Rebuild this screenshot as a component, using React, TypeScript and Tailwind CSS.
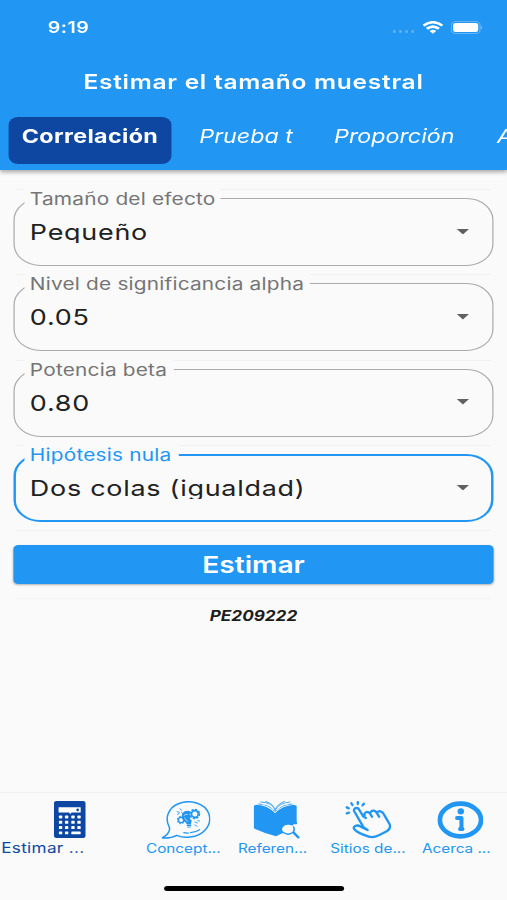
import React from "react";

type FieldProps = {
  label: string;
  value: string;
  notch: string;
  focused?: boolean;
};

function Divider() {
  return <div className="mx-[13px] h-px shrink-0 bg-[#f1f1f1]" />;
}

function SelectField({ label, value, notch, focused }: FieldProps) {
  return (
    <div
      className={`relative mx-[11.4px] my-[8.15px] flex h-[68px] shrink-0 items-center justify-between rounded-[22px] ${
        focused ? "border-2 border-[#2196f3] pl-[11px] pr-[18px]" : "border border-[#ababab] pl-[12px] pr-[19px]"
      }`}
    >
      <div
        className={`absolute h-5 bg-[#fafafa] pl-[4px] text-[17px] leading-5 tracking-[0.16px] ${notch} ${
          focused ? "-top-[11px] left-[7px] text-[#2196f3]" : "-top-[10px] left-[8px] text-[#757575]"
        }`}
      >
        {label}
      </div>
      <div className="h-[22px] overflow-hidden text-[22px] leading-[22px] tracking-[0.6px] text-[#212121]">
        {value}
      </div>
      <svg className="mb-px h-[5.5px] w-[10px]" viewBox="0 0 10 5" preserveAspectRatio="none">
        <path d="M0 0h10L5 5z" fill="#616161" />
      </svg>
    </div>
  );
}

function CalculatorIcon() {
  const cols = [15, 33, 52, 70];
  const rows = [44, 60, 76, 92];
  return (
    <svg className="h-[37px] w-[26px]" viewBox="0 0 95 112" preserveAspectRatio="none">
      <rect width="95" height="112" rx="8" fill="#0d47a1" />
      <path d="M14 19h66v16H53l-4 4-4-4H14z" fill="#fff" />
      <circle cx="71" cy="27" r="4" fill="#0d47a1" />
      {rows.map((y, r) =>
        cols.map((x, c) =>
          r === 3 && c > 1 ? null : <rect key={`${x}-${y}`} x={x} y={y} width="10" height="9" rx="2" fill="#fff" />
        )
      )}
      <rect x="52" y="92" width="28" height="9" rx="2" fill="#fff" />
    </svg>
  );
}

function ConceptIcon() {
  return (
    <svg className="ml-[4px] h-[38px] w-[40px]" viewBox="0 0 146 114" preserveAspectRatio="none" fill="none" stroke="#2196f3" strokeLinecap="round" strokeLinejoin="round">
      <path d="M2 111C18 101 26 90 23 79C8 52 20 21 48 9C84-7 130 7 141 39C151 73 125 104 85 108C68 111 54 107 45 103C32 110 18 112 2 111Z" strokeWidth="4.5" />
      <path d="M66 95q8 2 14 1M86 95q15-1 27-9" strokeWidth="3.5" />
      <path d="M76 69C75 61 60 59 61 46C61 34 73 28 84 32C80 38 81 42 87 46C82 50 82 55 88 59L86 69Z" fill="#2196f3" strokeWidth="3" />
      <path d="M76 73h11M78 78h7" strokeWidth="3.5" />
      <circle cx="99" cy="39" r="10" strokeWidth="5" />
      <circle cx="99" cy="39" r="14" strokeWidth="4" strokeDasharray="4 7" />
      <circle cx="58" cy="57" r="8" strokeWidth="4" />
      <circle cx="58" cy="57" r="11" strokeWidth="3" strokeDasharray="3 6" />
      <path d="M67 43q5-5 9-3M68 51q6 4 9 10" stroke="#fafafa" strokeWidth="2" />
      <path d="M54 23l6 5M46 32l7 2M59 33l3 4M47 40l5-2M99 63l8 3M99 72l7 4M108 59l5 1" strokeWidth="2.5" />
    </svg>
  );
}

function BookIcon() {
  return (
    <svg className="ml-[2px] h-[38px] w-[38px]" viewBox="0 0 138 114" preserveAspectRatio="none">
      <path d="M1 14l8-3Q44 13 64 37Q82 14 120 11l8 3V77L116 95L85 97L67 106Q36 98 1 82Z" fill="#2196f3" />
      <path d="M14 9Q45 9 64 32Q82 11 115 9M20 3Q52 3 64 29Q76 6 109 3M35 1Q58 7 64 27Q70 9 93 1" fill="none" stroke="#2196f3" strokeWidth="2.5" />
      <path d="M24 8Q50 9 61 27M105 8Q80 10 68 27" fill="none" stroke="#fafafa" strokeWidth="3.5" />
      <path d="M92 99L119 70H138V114H92Z" fill="#fafafa" />
      <ellipse cx="103" cy="85" rx="18" ry="14" fill="#fafafa" />
      <path d="M119 95l14 14" stroke="#2196f3" strokeWidth="7" strokeLinecap="round" />
      <path d="M88 94Q104 106 118 93Q124 85 118 76" fill="none" stroke="#2196f3" strokeWidth="4" />
      <path d="M127 62v7" stroke="#2196f3" strokeWidth="4" />
    </svg>
  );
}

function TapIcon() {
  return (
    <svg className="ml-[2px] h-[38px] w-[38px]" viewBox="0 0 138 114" preserveAspectRatio="none" fill="none" stroke="#2196f3" strokeLinecap="round" strokeLinejoin="round">
      <path
        d="M53 46L41 26C36 17 23 22 26 30L54 79L66 87L44 76C33 70 22 77 26 84C34 94 50 101 70 107C80 110 91 107 101 102L120 92C131 86 135 78 131 69L116 43C110 30 98 26 94 37C88 26 77 27 73 37C65 29 55 34 57 43M53 46L61 51M73 37L79 47M94 37L100 47"
        strokeWidth="7"
      />
      <path d="M4 37l7-2M4 19l6 3M18 7l3 5M37 3v6M55 8l-4 5" strokeWidth="7" />
    </svg>
  );
}

function InfoIcon() {
  return (
    <svg className="h-[38px] w-[38px]" viewBox="0 0 138 114" preserveAspectRatio="none">
      <ellipse cx="69" cy="57" rx="61" ry="49" fill="none" stroke="#2196f3" strokeWidth="14" />
      <circle cx="70" cy="31" r="9.5" fill="#2196f3" />
      <path d="M59 51h13V84M68 84h7" fill="none" stroke="#2196f3" strokeWidth="12" strokeLinecap="round" strokeLinejoin="round" />
    </svg>
  );
}

const navItems = [
  { label: "Concept...", icon: <ConceptIcon />, offset: "" },
  { label: "Referen...", icon: <BookIcon />, offset: "mr-[5px]" },
  { label: "Sitios de...", icon: <TapIcon />, offset: "" },
  { label: "Acerca ...", icon: <InfoIcon />, offset: "mr-[6.5px]" },
];

export default function App() {
  return (
    <div className="h-[900px] w-[507px] overflow-hidden bg-[#fafafa]">
      {/* The phone screen is laid out 414 wide and stretched horizontally. */}
      <div className="flex h-[900px] w-[414px] origin-top-left scale-x-[1.2246] flex-col whitespace-nowrap bg-[#fafafa] font-['Inter','Liberation_Sans',sans-serif]">
        <header className="z-10 h-[170px] shrink-0 bg-[#2196f3] text-white shadow-[0_2px_4px_rgba(0,0,0,0.35)]">
          <div className="flex h-[54px] items-center justify-between pl-[39px] pr-[20px]">
            <span className="text-[16px] font-semibold tracking-[0.4px]">9:19</span>
            <div className="flex items-center">
              <div className="mr-[7px] mt-[9px] flex gap-[2.5px] opacity-30">
                <i className="size-[2.5px] rounded-full bg-white" />
                <i className="size-[2.5px] rounded-full bg-white" />
                <i className="size-[2.5px] rounded-full bg-white" />
                <i className="size-[2.5px] rounded-full bg-white" />
              </div>
              <svg className="mr-[6px] h-[13px] w-[17px]" viewBox="0 0 17 13" fill="none" stroke="#fff" strokeWidth="2.5">
                <path d="M.8 4.6Q8.5-2.2 16.2 4.6M3.6 7.8Q8.5 3.4 13.4 7.8" />
                <path d="M8.5 12.7L5.8 9.9Q8.5 7.8 11.2 9.9Z" fill="#fff" stroke="none" />
              </svg>
              <svg className="h-[13px] w-[26px]" viewBox="0 0 26 13">
                <rect x=".5" y=".5" width="23.5" height="12" rx="3.5" fill="none" stroke="#fff" strokeOpacity=".3" />
                <rect x="2" y="2" width="20.5" height="9" rx="2" fill="#fff" />
                <path d="M25 4.5q1.4 2 0 4z" fill="#fff" fillOpacity=".5" />
              </svg>
            </div>
          </div>
          <h1 className="flex h-[54px] items-center justify-center pt-px text-[20px] font-semibold tracking-[0.6px]">
            Estimar el tamaño muestral
          </h1>
          <nav className="flex h-[62px] overflow-hidden pl-[7.3px] pt-[9px] text-[19px] leading-[39px]">
            <span className="h-[47px] w-[132.3px] shrink-0 rounded-lg bg-[#0d47a1] text-center font-bold tracking-[0.3px]">
              Correlación
            </span>
            <span className="ml-[23.2px] w-[110px] shrink-0 italic">Prueba t</span>
            <span className="w-[133px] shrink-0 italic">Proporción</span>
            <span className="shrink-0 italic">A</span>
          </nav>
        </header>

        <main className="flex grow flex-col pt-[19px]">
          <Divider />
          <SelectField label="Tamaño del efecto" value="Pequeño" notch="w-[160px]" />
          <Divider />
          <SelectField label="Nivel de significancia alpha" value="0.05" notch="w-[233px]" />
          <Divider />
          <SelectField label="Potencia beta" value="0.80" notch="w-[122px]" />
          <Divider />
          <SelectField label="Hipótesis nula" value="Dos colas (igualdad)" notch="w-[126px]" focused />
          <Divider />
          <button className="mx-[11px] mb-[14px] mt-[14px] h-[39px] rounded bg-[#2196f3] pt-[2px] text-[23px] font-semibold text-white shadow-[0_1px_2px_rgba(0,0,0,0.3)]">
            Estimar
          </button>
          <Divider />
          <p className="mt-[7px] text-center text-[14px] font-bold italic leading-5 text-[#1d1d1d]">PE209222</p>
        </main>

        <footer className="h-[108px] shrink-0 border-t border-[#efefef]">
          <div className="flex h-[93px] pt-[8px]">
            <div className="flex w-[112px] flex-col text-[#0d47a1]">
              <div className="flex h-[38px] justify-center pl-[2px]">
                <CalculatorIcon />
              </div>
              <span className="pl-px text-[14px] leading-[17px] tracking-[0.25px]">Estimar ...</span>
            </div>
            {navItems.map((item) => (
              <div key={item.label} className="flex w-[75.4px] flex-col items-center text-[#2196f3]">
                {item.icon}
                <span className={`text-[12.5px] leading-[19px] ${item.offset}`}>{item.label}</span>
              </div>
            ))}
          </div>
          <div className="mx-auto h-[5px] w-[147px] rounded-full bg-black" />
        </footer>
      </div>
    </div>
  );
}
